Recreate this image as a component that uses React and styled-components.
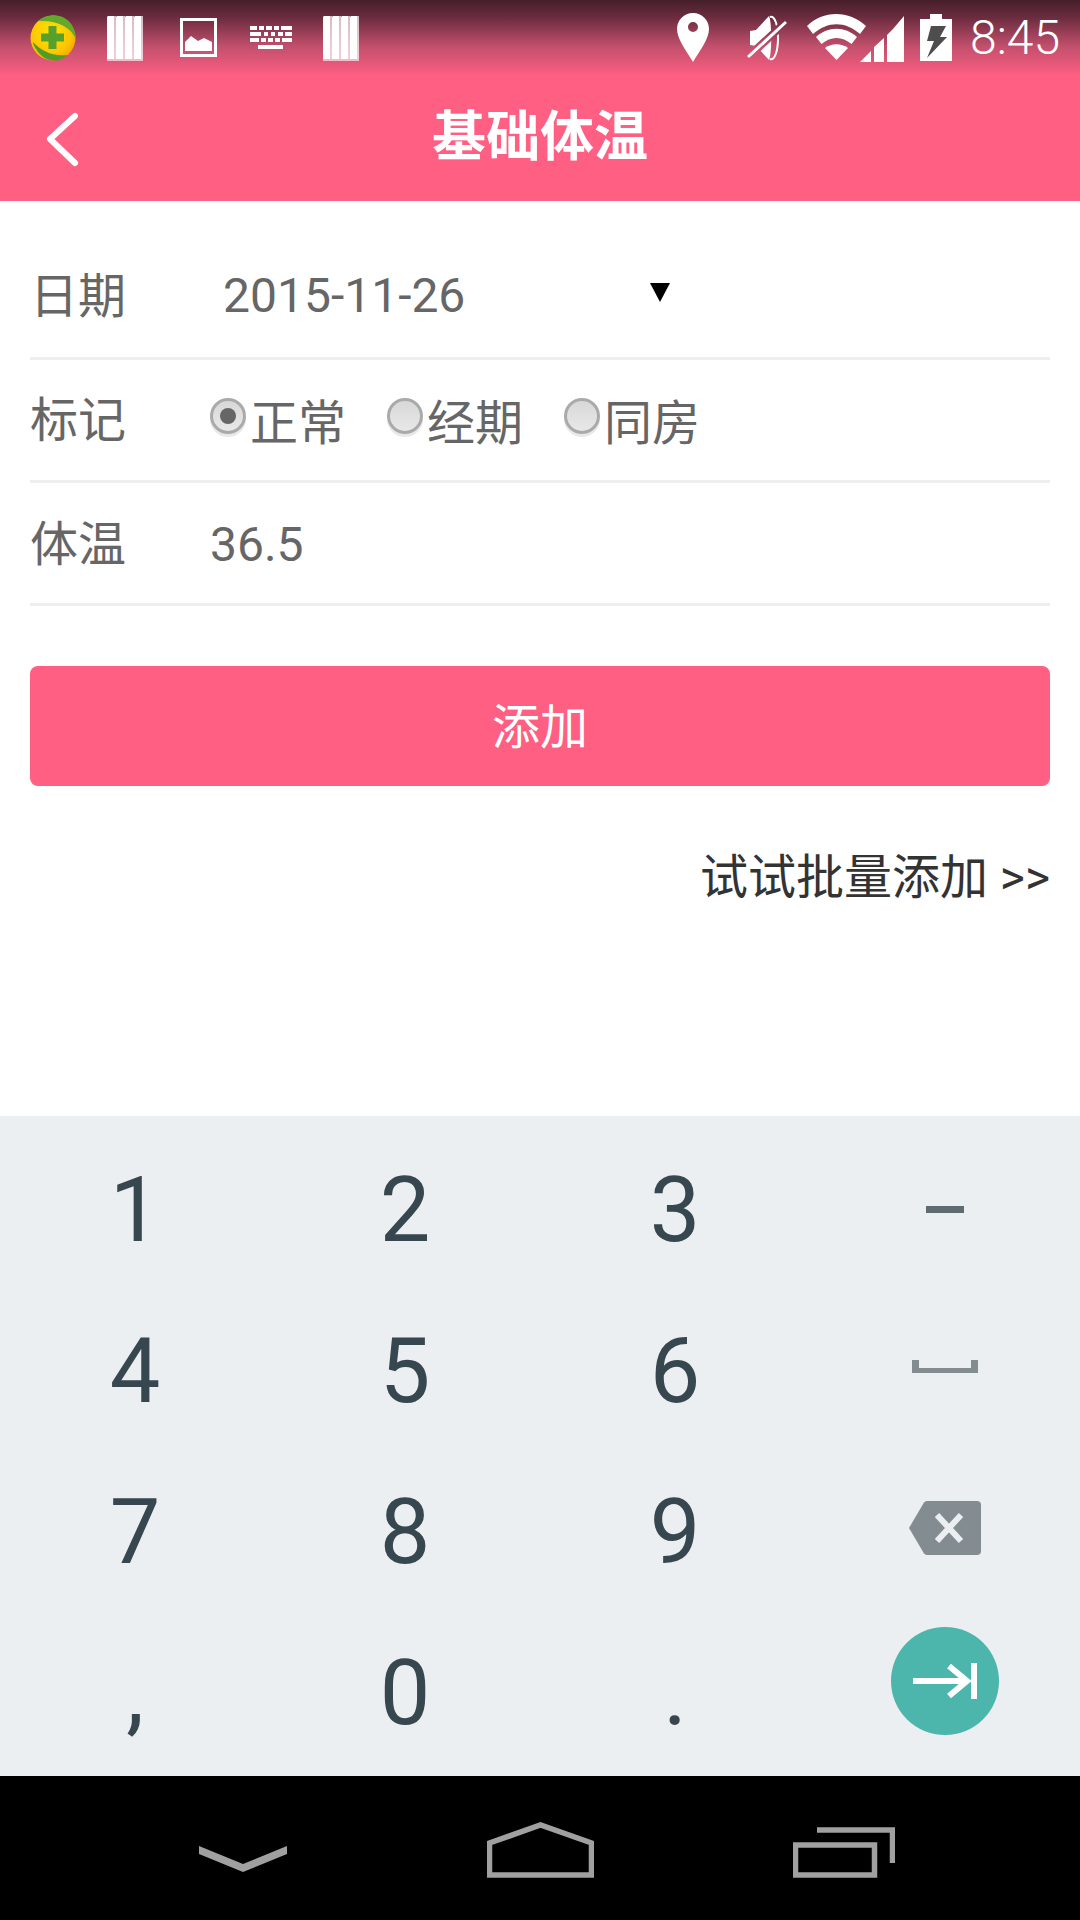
import React from 'react';
import styled, { createGlobalStyle } from 'styled-components';

const Global = createGlobalStyle`
  html, body { margin: 0; padding: 0; background: #fff; }
  * { box-sizing: border-box; }
`;
const CJK = `Roboto, "Noto Sans CJK SC", sans-serif`;
const Screen = styled.div`
  width: 1080px; height: 1920px; display: flex; flex-direction: column;
  font-family: ${CJK}; background: #fff; overflow: hidden;
`;
const Header = styled.header`
  height: 201px; flex: none;
  background: linear-gradient(180deg, #451f2b 0, #6d2c40 18px, #c14f6c 46px, #ff5f82 76px);
`;
const StatusBar = styled.div`
  height: 75px; display: flex; align-items: center; justify-content: space-between; padding: 0 20px 0 30px;
`;
const StatusGroup = styled.div`
  display: flex; align-items: center;
`;
const Clock = styled.span`
  font-size: 48px; font-weight: 300; color: #fff; margin-left: 18px; line-height: 75px;
`;
const TitleBar = styled.div`
  height: 126px; display: flex; align-items: center; justify-content: center; position: relative;
`;
const Title = styled.h1`
  margin: 0; font-size: 54px; font-weight: 700; color: #fff; line-height: 1;
`;
const Back = styled.svg`
  position: absolute; left: 44px; top: 36px;
`;
const Form = styled.main`
  flex: 1; padding: 36px 30px 0; display: flex; flex-direction: column;
`;
const Row = styled.div`
  height: 123px; padding-bottom: 3px; border-bottom: 3px solid #eeeeee; display: flex; align-items: center;
  font-size: 48px; color: #666; position: relative;
`;
const Label = styled.span`
  width: 180px; flex: none; padding-bottom: ${p => p.$lift}px;
`;
const DateValue = styled.span`
  margin-left: 13px;
`;
const TempValue = styled.span`
  padding-top: 6px;
`;
const Caret = styled.span`
  position: absolute; left: 620px; top: 46px; width: 0; height: 0;
  border-left: 10px solid transparent; border-right: 10px solid transparent; border-top: 19px solid #000;
`;
const RadioGroup = styled.div`
  display: flex; gap: 41px;
`;
const RadioItem = styled.label`
  display: flex; align-items: center; gap: 4px;
`;
const RadioMark = styled.span`
  width: 36px; height: 36px; flex: none; border-radius: 50%; margin-top: -6px;
  background: linear-gradient(180deg, #d8d8d8, #e8e8e8);
  border: 3px solid #aaa; box-shadow: 0 3px 0 #e8e8e8;
  display: flex; align-items: center; justify-content: center;
  &::after { content: ''; width: 16px; height: 16px; border-radius: 50%; background: ${p => p.$checked ? '#666' : 'transparent'}; }
`;
const SubmitButton = styled.button`
  margin-top: 60px; height: 120px; flex: none; border: 0; border-radius: 8px; background: #ff5f82; color: #fff;
  font: inherit; font-size: 48px; padding: 0 0 7px;
`;
const BatchLink = styled.a`
  margin-top: 62px; align-self: flex-end; font-size: 48px; line-height: 60px; color: #333;
`;
const Keyboard = styled.section`
  height: 660px; flex: none; background: #eceff1; padding: 14px 0 0;
  display: grid; grid-template-columns: repeat(4, 270px); grid-auto-rows: 161px;
`;
const Key = styled.div`
  display: flex; align-items: center; justify-content: center;
  font-size: 90px; color: #37474f; line-height: 1; padding-bottom: ${p => p.$lift || 0}px;
`;
const Enter = styled.div`
  width: 108px; height: 108px; border-radius: 50%; background: #4db6ac; display: flex; align-items: center; justify-content: center;
`;
const Nav = styled.nav`
  height: 144px; flex: none; background: #000; position: relative;
`;
const NavIcon = styled.svg`
  position: absolute; left: ${p => p.$x}px; top: ${p => p.$y}px;
`;

const Bars = () => (
  <svg width="36" height="46" viewBox="0 0 36 46" style={{ display: 'block' }}>
    {[0, 9, 18, 27].map(x => (
      <g key={x}>
        <path d={`M${x} 2 l1 -1 h6 v43 h-7 z`} fill="#fff" />
        <rect x={x + 7} y="1" width="2" height="43" fill="#fff" opacity=".7" />
        <rect x={x} y="44" width="9" height="2" fill="#fff" opacity=".6" />
      </g>
    ))}
  </svg>
);
const Slot = styled.span`
  display: flex; flex: none; margin-left: ${p => p.$ml || 0}px;
`;

export default function App() {
  return (
    <Screen>
      <Global />
      <Header>
        <StatusBar>
          <StatusGroup>
            <Slot>
              <svg width="46" height="46" viewBox="0 0 46 46">
                <defs>
                  <radialGradient id="y" cx=".45" cy=".4" r=".65">
                    <stop offset="0" stopColor="#ffe600" /><stop offset=".7" stopColor="#fcc400" /><stop offset="1" stopColor="#efa000" />
                  </radialGradient>
                </defs>
                <circle cx="23" cy="23" r="22.500" fill="url(#y)" />
                <path d="M8 6 C18 -3 36 -2 43 12 C45 17 45.500 20 45.500 23 C40 12 28 5 8 6Z" fill="#62a92c" />
                <path d="M38 40 C28 49 14 47 6 34 C4 31 3 29 3 27 C10 35 22 42 38 40Z" fill="#4f9c28" />
                <path d="M18.500 11h8v7.500h7.500v8h-7.500v7.500h-8v-7.500h-7.500v-8h7.500z" fill="#57a02a" />
              </svg>
            </Slot>
            <Slot $ml={31}><Bars /></Slot>
            <Slot $ml={37}>
              <svg width="37" height="39" viewBox="0 0 37 39">
                <rect x="1.500" y="1.500" width="34" height="36" fill="none" stroke="#fff" strokeWidth="3" />
                <path d="M5 33v-9l6-6 7 5 6-3 8 4v9z" fill="#fff" />
              </svg>
            </Slot>
            <Slot $ml={33}>
              <svg width="42" height="23" viewBox="0 0 42 23" fill="#fff">
                <path d="M0 0h7v4H0zM9 0h5v4H9zM16 0h6v4h-6zM24 0h5v4h-5zM31 0h11v4H31zM0 6h11v4H0zM14 6h4v4h-4zM21 6h4v4h-4zM28 6h5v4h-5zM35 6h7v4h-7zM0 12h9v4H0zM11 12h5v4h-5zM18 12h5v4h-5zM25 12h5v4h-5zM32 12h10v4H32zM8 19h25v4H8z" />
              </svg>
            </Slot>
            <Slot $ml={31}><Bars /></Slot>
          </StatusGroup>
          <StatusGroup>
            <Slot>
              <svg width="32" height="49" viewBox="0 0 32 49">
                <path fillRule="evenodd" fill="#fff" d="M16 0C7 0 0 7 0 16c0 10 10 23 16 33 6-10 16-23 16-33C32 7 25 0 16 0zM16 9a5 5 0 1 1 0 10 5 5 0 0 1 0-10z" />
              </svg>
            </Slot>
            <Slot $ml={38}>
              <svg width="40" height="46" viewBox="0 0 40 46" fill="none">
                <defs>
                  <mask id="cut">
                    <rect width="40" height="46" fill="#fff" />
                    <path d="M0 43L39 7" stroke="#000" strokeWidth="8" />
                  </mask>
                </defs>
                <g mask="url(#cut)">
                  <path d="M3 16l6-1L22 1c3 6 3 38 0 44L9 31l-6-1z" fill="#fff" />
                  <path d="M23 2c5-2 8 9 8 21s-3 23-8 21" stroke="#fff" strokeWidth="2" />
                </g>
                <path d="M1 42L39 7" stroke="#fff" strokeWidth="3" />
              </svg>
            </Slot>
            <Slot $ml={20}>
              <svg width="97" height="48" viewBox="0 0 97 48" fill="#fff">
                <path d="M0 12 C16 -4 42 -4 59 12 L53 20 C38 7 21 7 6 20Z" />
                <path d="M9 23 C21 12 38 12 50 23 L44.500 30 C35 22 24 22 14.500 30Z" />
                <path d="M18 34 C25 29 34 29 41 34 L29.500 46Z" />
                <path d="M53 48 L64 37 V48Z M67 48 V33 L77 24 V48Z M80 48 V21 L88 13 V48Z M86 48 V15 L97 2 V48Z" />
              </svg>
            </Slot>
            <Slot $ml={16}>
              <svg width="32" height="47" viewBox="0 0 32 47">
                <path d="M10 0h12v5h10v42H0V5h10z" fill="#fff" />
                <path d="M11 12h15l-6 11h7L7 44l7-17H7z" fill="#4d4d4d" />
              </svg>
            </Slot>
            <Clock>8:45</Clock>
          </StatusGroup>
        </StatusBar>
        <TitleBar>
          <Back width="40" height="56" viewBox="0 0 40 56" fill="none">
            <path d="M31 5L6 28l25 24" stroke="#fff" strokeWidth="6" strokeLinecap="round" strokeLinejoin="round" />
          </Back>
          <Title>基础体温</Title>
        </TitleBar>
      </Header>
      <Form>
        <Row>
          <Label $lift={8}>日期</Label>
          <DateValue>2015-11-26</DateValue>
          <Caret />
        </Row>
        <Row>
          <Label $lift={5}>标记</Label>
          <RadioGroup>
            <RadioItem><RadioMark $checked />正常</RadioItem>
            <RadioItem><RadioMark />经期</RadioItem>
            <RadioItem><RadioMark />同房</RadioItem>
          </RadioGroup>
        </Row>
        <Row>
          <Label $lift={3}>体温</Label>
          <TempValue>36.5</TempValue>
        </Row>
        <SubmitButton>添加</SubmitButton>
        <BatchLink>试试批量添加 &gt;&gt;</BatchLink>
      </Form>
      <Keyboard>
        <Key>1</Key><Key>2</Key><Key>3</Key>
        <Key $lift={3}>
          <svg width="38" height="7"><rect width="38" height="7" fill="#5e6c72" /></svg>
        </Key>
        <Key>4</Key><Key>5</Key><Key>6</Key>
        <Key $lift={11}>
          <svg width="66" height="13" viewBox="0 0 66 13"><path d="M0 0h7v8h52V0h7v13H0z" fill="#838d91" /></svg>
        </Key>
        <Key>7</Key><Key>8</Key><Key>9</Key>
        <Key $lift={9}>
          <svg width="72" height="54" viewBox="0 0 72 54">
            <path d="M18 0h50a4 4 0 0 1 4 4v46a4 4 0 0 1-4 4H18a4 4 0 0 1-3-1.500L0 27 15 1.500A4 4 0 0 1 18 0z" fill="#838d91" />
            <path d="M28 14l24 26M52 14L28 40" stroke="#eceff1" strokeWidth="6" />
          </svg>
        </Key>
        <Key>,</Key><Key>0</Key><Key>.</Key>
        <Key $lift={26}>
          <Enter>
            <svg width="64" height="36" viewBox="0 0 64 36" fill="none" stroke="#fff" strokeWidth="6">
              <path d="M0 18h54M36 3l18 15-18 15M61 0v36" />
            </svg>
          </Enter>
        </Key>
      </Keyboard>
      <Nav>
        <NavIcon $x={199} $y={70} width="88" height="26" viewBox="0 0 88 26">
          <path d="M0 0L44 18 88 0v8L44 26 0 8z" fill="#a0a0a0" />
        </NavIcon>
        <NavIcon $x={487} $y={46} width="107" height="56" viewBox="0 0 107 56" fill="none">
          <path d="M2.500 53V21L53.500 3l51 18v32z" stroke="#a0a0a0" strokeWidth="5.500" />
        </NavIcon>
        <NavIcon $x={793} $y={51} width="102" height="51" viewBox="0 0 102 51" fill="none" stroke="#a0a0a0">
          <path d="M24 3h75.500v33" strokeWidth="5.500" />
          <rect x="2.500" y="18" width="79" height="30" strokeWidth="5.500" />
        </NavIcon>
      </Nav>
    </Screen>
  );
}
